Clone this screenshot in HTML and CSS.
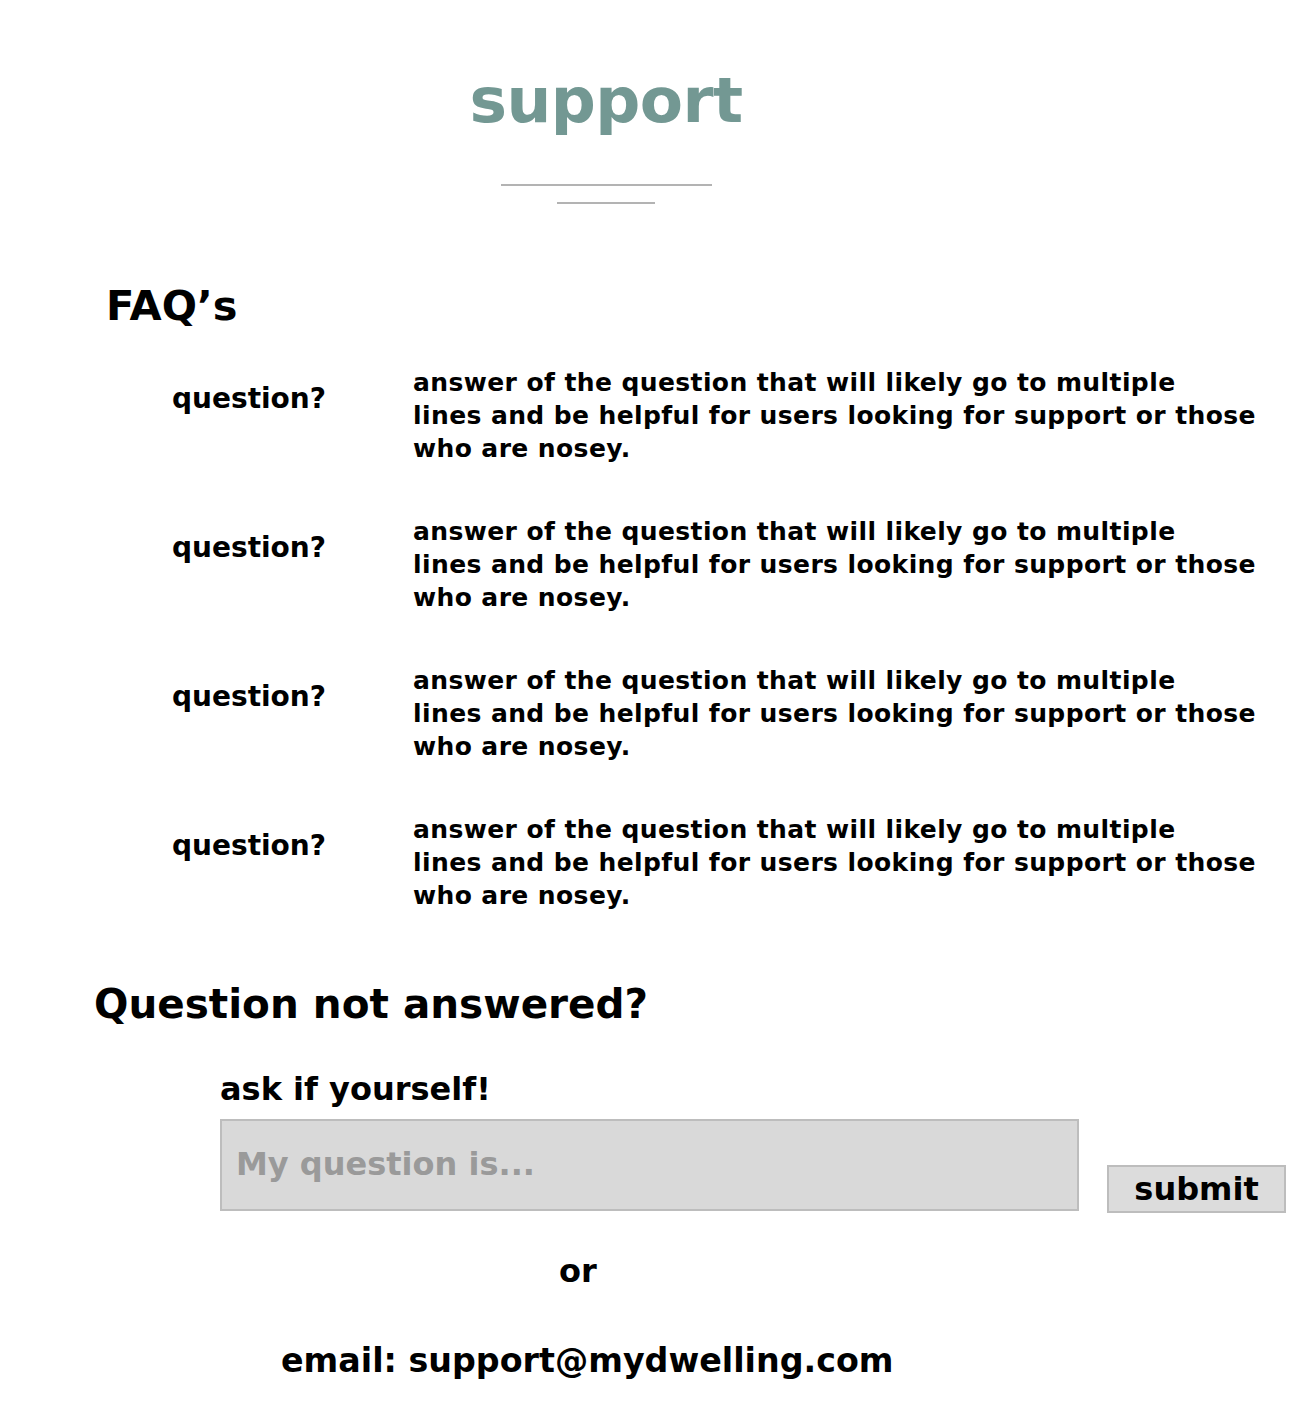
FILE: index.html
```html
<!DOCTYPE html>
<html>
<head>
<meta charset="utf-8">
<link rel="stylesheet" href="styles.css">
</head>
<body>
<div class="page">
  <header class="hero">
    <h1 class="title">support</h1>
    <div class="rule rule-long"></div>
    <div class="rule rule-short"></div>
  </header>

  <section class="faq">
    <h2 class="faq-title">FAQ’s</h2>
    <div class="faq-list">
      <div class="faq-item">
        <div class="q">question?</div>
        <div class="a">answer of the question that will likely go to multiple<br>lines and be helpful for users looking for support or those<br>who are nosey.</div>
      </div>
      <div class="faq-item">
        <div class="q">question?</div>
        <div class="a">answer of the question that will likely go to multiple<br>lines and be helpful for users looking for support or those<br>who are nosey.</div>
      </div>
      <div class="faq-item">
        <div class="q">question?</div>
        <div class="a">answer of the question that will likely go to multiple<br>lines and be helpful for users looking for support or those<br>who are nosey.</div>
      </div>
      <div class="faq-item">
        <div class="q">question?</div>
        <div class="a">answer of the question that will likely go to multiple<br>lines and be helpful for users looking for support or those<br>who are nosey.</div>
      </div>
    </div>
  </section>

  <section class="ask">
    <h2 class="ask-title">Question not answered?</h2>
    <div class="ask-body">
      <div class="ask-label">ask if yourself!</div>
      <div class="ask-row">
        <div class="ask-input">My question is...</div>
        <div class="ask-submit">submit</div>
      </div>
      <div class="or">or</div>
      <div class="email">email: support@mydwelling.com</div>
    </div>
  </section>
</div>
</body>
</html>
```

FILE: styles.css
```css
* { box-sizing: border-box; }
html, body { margin: 0; padding: 0; background: #fff; }
body {
  font-family: "DejaVu Sans", "Inter", sans-serif;
  font-weight: 700;
  color: #000;
  font-variant-ligatures: none;
}
.page { width: 1312px; }

.hero {
  width: 1212px;
  display: flex;
  flex-direction: column;
  align-items: center;
  padding-top: 63px;
}
.title {
  margin: 0;
  font-size: 63px;
  line-height: 76px;
  color: #739893;
  font-weight: 700;
  letter-spacing: -0.6px;
}
.rule { height: 2px; background: #b3b3b3; }
.rule-long { width: 211px; margin-top: 45px; }
.rule-short { width: 98px; margin-top: 16px; }

.faq { padding-left: 106px; margin-top: 76px; }
.faq-title {
  margin: 0;
  font-size: 41.5px;
  line-height: 52px;
  font-weight: 700;
}
.faq-list {
  display: flex;
  flex-direction: column;
  gap: 50px;
  margin-top: 34px;
}
.faq-item {
  display: grid;
  grid-template-columns: 241px 1fr;
  padding-left: 66px;
}
.q {
  font-size: 28px;
  line-height: 33px;
  align-self: start;
  padding-top: 16px;
}
.a {
  font-size: 25px;
  line-height: 33px;
  letter-spacing: 0.4px;
}

.ask { padding-left: 94px; margin-top: 66px; }
.ask-title {
  margin: 0;
  font-size: 40.5px;
  line-height: 52px;
  font-weight: 700;
}
.ask-body { padding-left: 126px; margin-top: 39px; }
.ask-label { font-size: 32px; line-height: 40px; }
.ask-row {
  display: flex;
  align-items: flex-end;
  gap: 28px;
  margin-top: 10px;
}
.ask-input {
  width: 859px;
  height: 92px;
  background: #d9d9d9;
  border: 2px solid #bdbdbd;
  color: #9a9a9a;
  font-size: 32px;
  padding: 24px 0 0 14px;
}
.ask-submit {
  width: 179px;
  height: 48px;
  background: #dcdcdc;
  border: 2px solid #bdbdbd;
  font-size: 32px;
  line-height: 44px;
  text-align: center;
  margin-bottom: -2px;
}
.or {
  width: 716px;
  text-align: center;
  font-size: 32px;
  line-height: 40px;
  margin-top: 40px;
}
.email {
  font-size: 33.3px;
  line-height: 40px;
  margin-top: 50px;
  padding-left: 61px;
}
```
